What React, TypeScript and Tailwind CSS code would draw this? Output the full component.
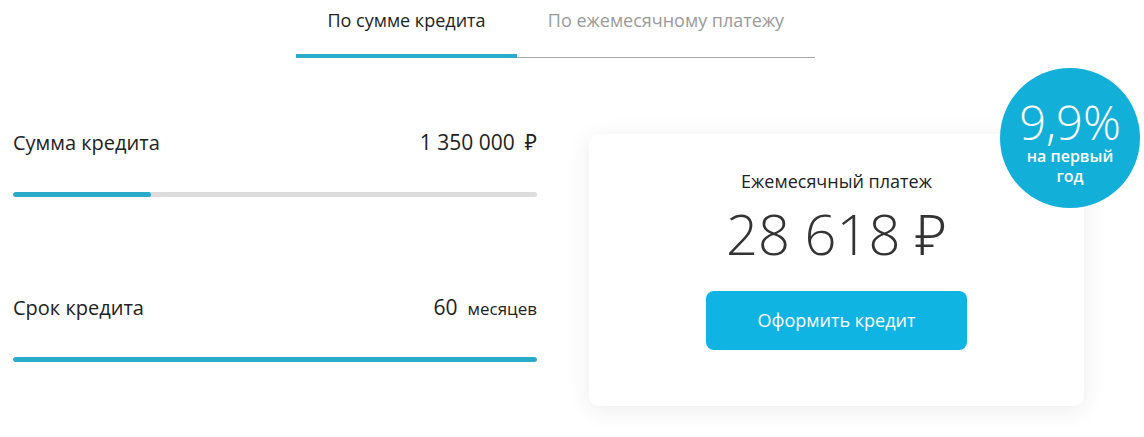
import React from "react";

const font = { fontFamily: '"Open Sans", "Noto Sans", sans-serif' };

function Slider({ label, value, unit, fill }: { label: string; value: string; unit: React.ReactNode; fill: number }) {
  return (
    <div className="flex flex-col">
      <div className="flex items-center justify-between h-[30px]">
        <span className="text-[20px] text-[#222]">{label}</span>
        <span className="flex items-baseline gap-[10px] text-[21px] text-[#222]">
          {value}
          {unit}
        </span>
      </div>
      <div className="mt-[34px] h-[5px] w-full rounded-full bg-[#dcdcdc] overflow-hidden">
        <div className="h-full rounded-full bg-[#29abc9]" style={{ width: `${fill}%` }} />
      </div>
    </div>
  );
}

export default function App() {
  return (
    <div className="w-[1144px] h-[437px] bg-white overflow-hidden" style={font}>
      <div className="ml-[296px] flex w-[519px] pt-[7px]">
        <div className="w-[221px] flex flex-col">
          <div className="h-[47px] text-center text-[18px] text-[#222] leading-[26px]">По сумме кредита</div>
          <div className="h-[4px] bg-[#29abc9]" />
        </div>
        <div className="flex-1 flex flex-col">
          <div className="h-[47px] text-center text-[18px] text-[#9a9a9a] leading-[26px]">По ежемесячному платежу</div>
          <div className="h-[4px] flex items-end">
            <div className="h-[1.5px] w-full bg-[#a8a8a8]" />
          </div>
        </div>
      </div>

      <div className="flex px-[13px] mt-[70px] gap-[52px]">
        <div className="w-[524px] flex flex-col gap-[96px]">
          <Slider label="Сумма кредита" value="1 350 000" unit={<span className="text-[21px]">₽</span>} fill={26.3} />
          <Slider label="Срок кредита" value="60" unit={<span className="text-[17px]">месяцев</span>} fill={100} />
        </div>

        <div className="relative mt-[6px] w-[495px] h-[272px] rounded-[10px] bg-white shadow-[0_4px_24px_rgba(0,0,0,0.08)] flex flex-col items-center">
          <div className="mt-[33px] text-[18px] text-[#222] leading-[28px]">Ежемесячный платеж</div>
          <div className="mt-[8px] text-[56px] font-light text-[#333] leading-[60px]">28 618 ₽</div>
          <button className="mt-[28px] w-[261px] h-[59px] rounded-[8px] bg-[#0fb4e3] text-white text-[18px]">
            Оформить кредит
          </button>
          <div className="absolute left-[411px] top-[-66px] w-[140px] h-[140px] rounded-full bg-[#12afd9] flex flex-col items-center pt-[30px] text-white">
            <div className="text-[47px] font-light leading-[48px]">9,9%</div>
            <div className="text-[16px] font-semibold leading-[20px]">на первый</div>
            <div className="text-[16px] font-semibold leading-[20px]">год</div>
          </div>
        </div>
      </div>
    </div>
  );
}
